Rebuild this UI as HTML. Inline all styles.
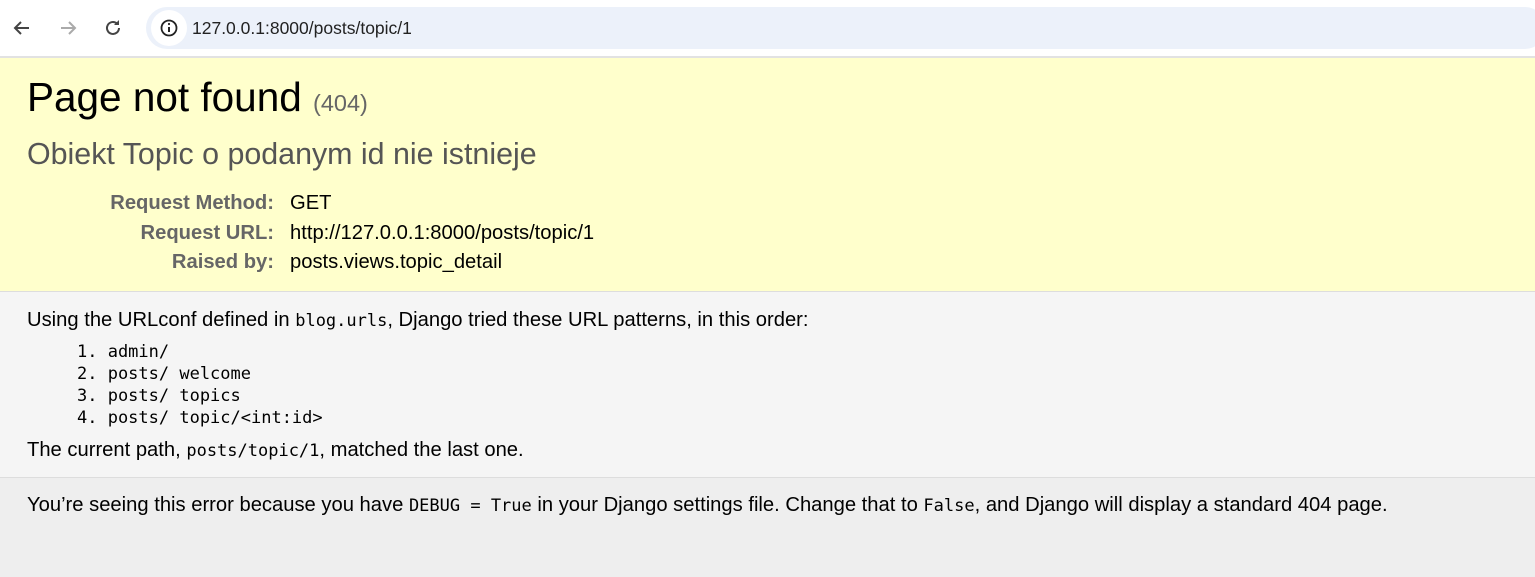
<!DOCTYPE html>
<html><head><meta charset="utf-8"><style>
*{margin:0;padding:0;box-sizing:border-box}
body{width:1535px;height:577px;overflow:hidden;background:#eee;font-family:"Liberation Sans",Arial,sans-serif;position:relative;color:#000}
.a{position:absolute;white-space:nowrap}
.mono{font-family:"DejaVu Sans Mono","Liberation Mono",monospace;font-size:17px}
</style></head><body>
<div class="a" style="left:0;top:0;width:1535px;height:56px;background:#fff"></div>
<div class="a" style="left:146px;top:7px;width:1400px;height:42px;background:#ecf1fa;border-radius:21px"></div>
<div class="a" style="left:151px;top:10px;width:36px;height:36px;background:#fff;border-radius:18px"></div>
<svg class="a" style="left:10px;top:16px" width="24" height="24" viewBox="0 0 24 24"><path d="M19 12H6M11 6l-6 6 6 6" fill="none" stroke="#444" stroke-width="2"/></svg>
<svg class="a" style="left:56px;top:16px" width="24" height="24" viewBox="0 0 24 24"><path d="M5 12h13M13 6l6 6-6 6" fill="none" stroke="#aaa" stroke-width="2"/></svg>
<svg class="a" style="left:101px;top:16px" width="24" height="24" viewBox="0 0 24 24"><path d="M18 12a6 6 0 1 1-2-4.5" fill="none" stroke="#444" stroke-width="2"/><path d="M18 4v5h-5z" fill="#444"/></svg>
<svg class="a" style="left:157px;top:16px" width="24" height="24" viewBox="0 0 24 24"><circle cx="12" cy="12" r="7.5" fill="none" stroke="#222" stroke-width="1.8"/><path d="M12 11v5" stroke="#222" stroke-width="2"/><circle cx="12" cy="8" r="1.1" fill="#222"/></svg>
<div class="a" style="left:192px;top:18px;font-size:17.5px;color:#222">127.0.0.1:8000/posts/topic/1</div>
<div class="a" style="left:0;top:56px;width:1535px;height:236px;background:#ffc;border-top:2px solid #e2e2e2;border-bottom:1px solid #ddd"></div>
<div class="a" style="left:0;top:292px;width:1535px;height:186px;background:#f5f5f5;border-bottom:1px solid #ddd"></div>
<div class="a" style="left:27px;top:74px;font-size:40.5px">Page not found <span style="font-size:23.5px;color:#666">(404)</span></div>
<div class="a" style="left:27px;top:137px;font-size:30.4px;color:#555">Obiekt Topic o podanym id nie istnieje</div>
<div class="a" style="left:40px;top:189px;width:234px;text-align:right;font-size:20.2px;font-weight:bold;color:#666;line-height:29.5px">Request Method:<br>Request URL:<br>Raised by:</div>
<div class="a" style="left:290px;top:189px;font-size:20.2px;line-height:29.5px">GET<br>http://127.0.0.1:8000/posts/topic/1<br>posts.views.topic_detail</div>
<div class="a" style="left:27px;top:309px;font-size:20.2px">Using the URLconf defined in <span class="mono">blog.urls</span>, Django tried these URL patterns, in this order:</div>
<div class="a mono" style="left:77px;top:341px;line-height:22px">1. admin/<br>2. posts/ welcome<br>3. posts/ topics<br>4. posts/ topic/&lt;int:id&gt;</div>
<div class="a" style="left:27px;top:439px;font-size:20.2px">The current path, <span class="mono">posts/topic/1</span>, matched the last one.</div>
<div class="a" style="left:27px;top:494px;font-size:20.2px">You’re seeing this error because you have <span class="mono">DEBUG = True</span> in your Django settings file. Change that to <span class="mono">False</span>, and Django will display a standard 404 page.</div>
</body></html>
